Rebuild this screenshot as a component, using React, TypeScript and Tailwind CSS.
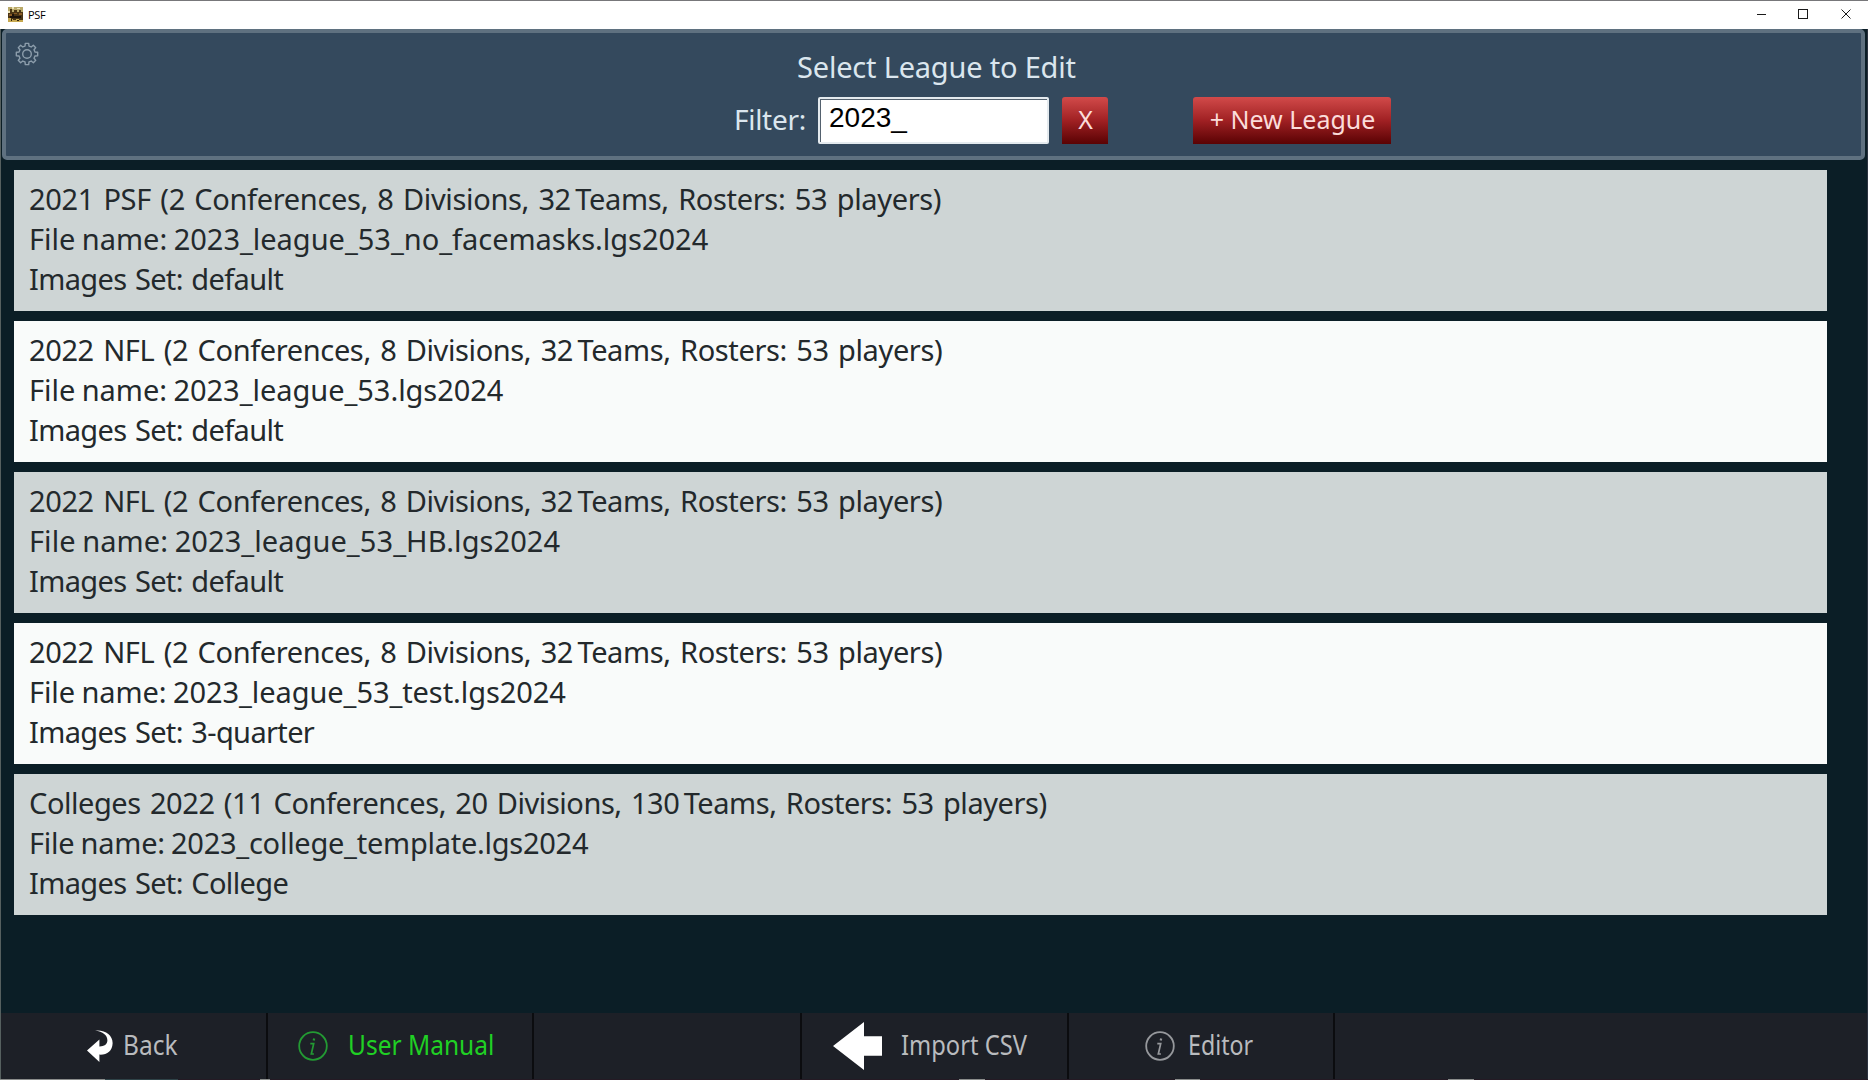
import type { ReactNode } from 'react'

type League = {
  title: string
  // "Teams" is kerned tightly against the team count
  rest: string
  fileName: string
  imagesSet: string
  titleSpacing: string
  fileSpacing: string
}

const leagues: League[] = [
  {
    title: '2021 PSF (2 Conferences, 8 Divisions, 32',
    rest: 'Teams, Rosters: 53 players)',
    fileName: '2023_league_53_no_facemasks.lgs2024',
    imagesSet: 'default',
    titleSpacing: 'tracking-[-0.34px]',
    fileSpacing: 'tracking-[-0.02px]',
  },
  {
    title: '2022 NFL (2 Conferences, 8 Divisions, 32',
    rest: 'Teams, Rosters: 53 players)',
    fileName: '2023_league_53.lgs2024',
    imagesSet: 'default',
    titleSpacing: 'tracking-[-0.38px]',
    fileSpacing: 'tracking-[-0.04px]',
  },
  {
    title: '2022 NFL (2 Conferences, 8 Divisions, 32',
    rest: 'Teams, Rosters: 53 players)',
    fileName: '2023_league_53_HB.lgs2024',
    imagesSet: 'default',
    titleSpacing: 'tracking-[-0.38px]',
    fileSpacing: 'tracking-[0.07px]',
  },
  {
    title: '2022 NFL (2 Conferences, 8 Divisions, 32',
    rest: 'Teams, Rosters: 53 players)',
    fileName: '2023_league_53_test.lgs2024',
    imagesSet: '3-quarter',
    titleSpacing: 'tracking-[-0.38px]',
    fileSpacing: 'tracking-[-0.08px]',
  },
  {
    title: 'Colleges 2022 (11 Conferences, 20 Divisions, 130',
    rest: 'Teams, Rosters: 53 players)',
    fileName: '2023_college_template.lgs2024',
    imagesSet: 'College',
    titleSpacing: 'tracking-[-0.45px]',
    fileSpacing: 'tracking-[-0.26px]',
  },
]

function gearPath() {
  const points: string[] = []
  for (let i = 0; i < 8; i++) {
    const steps = [
      [-14, 8.2],
      [-9, 10.8],
      [9, 10.8],
      [14, 8.2],
    ]
    for (const [offset, radius] of steps) {
      const a = ((i * 45 + offset - 90) * Math.PI) / 180
      points.push(
        `${(12 + radius * Math.cos(a)).toFixed(2)} ${(12 + radius * Math.sin(a)).toFixed(2)}`
      )
    }
  }
  return `M${points.join('L')}Z`
}

function GearIcon() {
  return (
    <svg
      viewBox="0 0 24 24"
      className="h-6 w-6 fill-none stroke-[#8d9eac]"
      strokeWidth="1.4"
      strokeLinejoin="round"
    >
      <path d={gearPath()} />
      <circle cx="12" cy="12" r="4.3" />
    </svg>
  )
}

function AppIcon() {
  return (
    <svg viewBox="0 0 15 15" className="h-[15px] w-[15px]">
      <rect width="15" height="15" fill="#4a3515" />
      <path d="M0 0h15v5h-2V3h-2v2H9V3H6v2H4V2H2v3H0z" fill="#b9a969" />
      <path d="M4 0h2v2H4zM9 1h3v1H9zM0 4h2v2H0z" fill="#ece2b8" />
      <path d="M1 7h3v2H1zM11 6h3v2h-3zM6 6h3v1H6z" fill="#8a5b26" />
      <path d="M2 9h11v2H2zM4 7h2v2H4z" fill="#1c130b" />
      <path d="M0 11h3v1h2v1h3v-1h3v1h4v2H0z" fill="#c6a850" />
      <path d="M3 12h1v2H3zM9 13h2v1H9z" fill="#30220e" />
    </svg>
  )
}

function TitleBar() {
  return (
    <div className="flex h-[29px] items-center justify-between border-t border-[#77777a] bg-white pr-[17px] pb-[2px] pl-2">
      <div className="flex items-center gap-[5px]">
        <AppIcon />
        <span className="font-['Open_Sans',sans-serif] text-[11px] leading-none tracking-[-0.3px] text-black">
          PSF
        </span>
      </div>
      <svg
        viewBox="0 0 94 10"
        className="h-[10px] w-[94px] fill-none stroke-[#1a1a1a]"
        strokeWidth="1"
      >
        <path d="M0 5.5h9" />
        <rect x="41.5" y="0.5" width="9" height="9" />
        <path d="M84.5 0.5l9 9M93.5 0.5l-9 9" />
      </svg>
    </div>
  )
}

function RedButton({
  children,
  className,
}: {
  children: ReactNode
  className: string
}) {
  return (
    <button
      className={`h-[47px] rounded-t-[3px] bg-linear-to-b from-[#d24a4a] via-[#a02023] to-[#5a0304] pb-px pl-px text-[25px] text-[#fbdcda] ${className}`}
    >
      {children}
    </button>
  )
}

function Header() {
  return (
    <header className="mr-[2px] ml-px flex h-[131px] rounded-[5px] border-4 border-[#5f7180] bg-[#34495d] text-[#dbe6ee]">
      <div className="w-[727px] pt-[9px] pl-[9px]">
        <GearIcon />
      </div>
      <div className="flex flex-col">
        <h1 className="mt-[14px] ml-[64px] text-[29px] leading-[40px] tracking-[-0.2px]">
          Select League to Edit
        </h1>
        <div className="mt-[10px] flex h-[47px] items-center">
          <span className="w-[85px] pb-[4px] pl-px text-[28px] leading-[40px] tracking-[-0.3px]">
            Filter:
          </span>
          <div className="h-[47px] w-[231px] rounded-[2px] border-2 border-[#e4eaee] bg-white">
            <div className="h-full border-t border-l border-[#54616e] pt-[2px] pl-[8px] font-['Liberation_Sans',Arial,sans-serif] text-[28px] leading-[32px] text-black">
              2023_
            </div>
          </div>
          <RedButton className="ml-[13px] w-[46px]">X</RedButton>
          <RedButton className="ml-[85px] w-[198px]">+ New League</RedButton>
        </div>
      </div>
    </header>
  )
}

function LeagueRow({ league }: { league: League }) {
  return (
    <li className="h-[141px] bg-[#f9fbfa] pt-[9px] pl-[15px] text-[29px] leading-[40px] text-[#23292c] odd:bg-[#ced5d5]">
      <div className={`[word-spacing:2.2px] ${league.titleSpacing}`}>
        {league.title} <span className="-ml-[5px]">{league.rest}</span>
      </div>
      <div className={`[word-spacing:-1px] ${league.fileSpacing}`}>
        File name: {league.fileName}
      </div>
      <div className="tracking-[-0.65px] [word-spacing:1.6px]">
        Images Set: {league.imagesSet}
      </div>
    </li>
  )
}

function InfoIcon({ className }: { className: string }) {
  return (
    <svg
      viewBox="0 0 30 30"
      className={`h-[30px] w-[30px] shrink-0 fill-none ${className}`}
      strokeWidth="1.8"
    >
      <circle cx="15" cy="15" r="13.8" />
      <path d="M12.3 12.6h3.4l-2.4 10.4h2.6" strokeWidth="1.7" />
      <path d="M16.2 7.4l-.5 2.2" strokeWidth="2.2" />
    </svg>
  )
}

function BackIcon() {
  return (
    <svg viewBox="0 0 26 32" className="h-8 w-[26px] shrink-0 fill-white">
      <path d="M8 .6C18 -.6 26 5 25.6 13.5C25.3 21 20 25 12.4 24.6V32L0 20.4L12.4 9.5V16.4C17 16.5 20.3 14.6 20.4 10.2C20.4 5.5 16 1.6 8 .6Z" />
    </svg>
  )
}

function ArrowIcon() {
  return (
    <svg viewBox="0 0 49 48" className="h-12 w-[49px] shrink-0 fill-white">
      <path d="M0 24L31 0V14.3H49V33.7H31V48Z" />
    </svg>
  )
}

function FooterCell({
  children,
  className = '',
}: {
  children?: ReactNode
  className?: string
}) {
  return (
    <div
      className={`flex h-full items-center border-r-2 border-[#0b0c0f] pb-px ${className}`}
    >
      {children}
    </div>
  )
}

function FooterLabel({
  children,
  className,
}: {
  children: ReactNode
  className: string
}) {
  return (
    <span
      className={`origin-left text-[26.5px] leading-none whitespace-nowrap ${className}`}
    >
      {children}
    </span>
  )
}

function Footer() {
  return (
    <footer className="flex h-[66px] bg-[#1d2027] text-[#b9bbbe]">
      <FooterCell className="w-[267px] pl-[86px]">
        <BackIcon />
        <FooterLabel className="ml-[10px] scale-x-[0.925]">Back</FooterLabel>
      </FooterCell>
      <FooterCell className="w-[266px] pl-[30px] text-[#20d024]">
        <InfoIcon className="stroke-[#239a33]" />
        <FooterLabel className="ml-[20px] scale-x-[0.925]">
          User Manual
        </FooterLabel>
      </FooterCell>
      <FooterCell className="w-[268px]" />
      <FooterCell className="w-[267px] pl-[31px]">
        <ArrowIcon />
        <FooterLabel className="ml-[19px] scale-x-[0.895]">
          Import CSV
        </FooterLabel>
      </FooterCell>
      <FooterCell className="w-[266px] pl-[76px]">
        <InfoIcon className="stroke-[#96989c]" />
        <FooterLabel className="ml-[13px] scale-x-[0.875]">Editor</FooterLabel>
      </FooterCell>
      <div className="flex-1" />
    </footer>
  )
}

function BottomEdge() {
  return (
    <div className="flex h-px bg-[#241a24]">
      <div className="w-[105px] bg-[#8b8d8c]" />
      <div className="w-[73px] bg-[#2f4348]" />
      <div className="ml-[82px] w-[10px] bg-[#8b8d8c]" />
      <div className="ml-[689px] w-[26px] bg-[#8b8d8c]" />
      <div className="ml-[190px] w-[25px] bg-[#8b8d8c]" />
      <div className="ml-[248px] w-[26px] bg-[#8b8d8c]" />
    </div>
  )
}

function App() {
  return (
    <div className="flex h-[1080px] w-[1868px] flex-col overflow-hidden bg-[#0b1e26] font-['Noto_Sans',sans-serif]">
      <TitleBar />
      <div className="flex flex-1 flex-col border-r border-l border-r-[#2b3340] border-l-[#56605f]">
        <Header />
        <ul className="mt-[10px] mr-[40px] ml-[13px] flex flex-1 flex-col gap-[10px]">
          {leagues.map((league) => (
            <LeagueRow key={league.fileName} league={league} />
          ))}
        </ul>
        <Footer />
      </div>
      <BottomEdge />
    </div>
  )
}

export default App
